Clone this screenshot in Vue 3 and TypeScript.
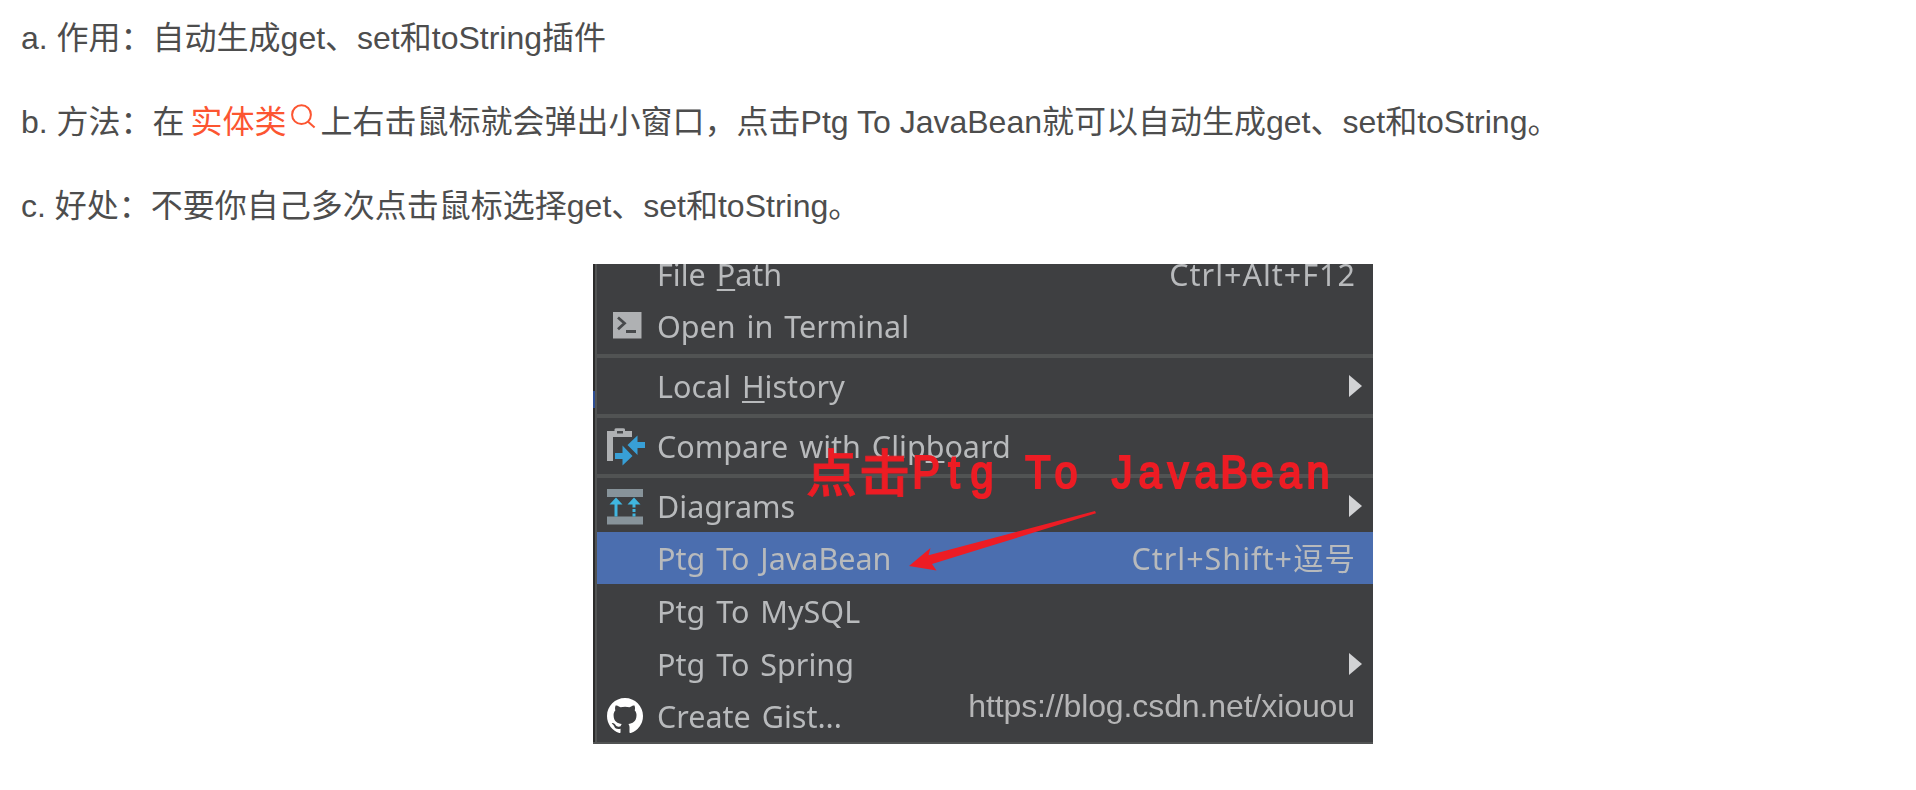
<script setup lang="ts">
interface MenuRow {
  before: string
  key?: string
  after?: string
  icon?: 'terminal' | 'clipboard' | 'diagram' | 'github'
  shortcut?: string
  submenu?: boolean
  active?: boolean
  divider?: boolean
  tall?: boolean
}

const rows: MenuRow[] = [
  { before: 'File ', key: 'P', after: 'ath', shortcut: 'Ctrl+Alt+F12' },
  { before: 'Open in Terminal', icon: 'terminal', divider: true },
  { before: 'Local ', key: 'H', after: 'istory', submenu: true, divider: true },
  { before: 'Compare with Clip', key: 'b', after: 'oard', icon: 'clipboard', divider: true },
  { before: 'Diagrams', icon: 'diagram', submenu: true },
  { before: 'Ptg To JavaBean', shortcut: 'Ctrl+Shift+逗号', active: true },
  { before: 'Ptg To MySQL', tall: true },
  { before: 'Ptg To Spring', submenu: true, tall: true },
  { before: 'Create Gist...', icon: 'github' },
]

const noteLetters = Array.from('Ptg To JavaBean')
</script>

<template>
  <article class="post">
    <p>a. 作用：自动生成get、set和toString插件</p>
    <p>
      b. 方法：在<a class="keyword">实体类<svg class="lens" viewBox="0 0 25 25"><circle cx="10.5" cy="10.7" r="9.4" /><path d="M16.8 17.6 23.6 23.6" /></svg></a>上右击鼠标就会弹出小窗口，点击Ptg To JavaBean就可以自动生成get、set和toString。
    </p>
    <p>c. 好处：不要你自己多次点击鼠标选择get、set和toString。</p>

    <figure class="shot">
      <div class="edge"></div>
      <div class="menu">
        <template v-for="row in rows" :key="row.before">
          <div class="row" :class="{ active: row.active, tall: row.tall }">
            <span class="icon">
              <svg v-if="row.icon === 'terminal'" width="40" height="40" viewBox="0 -1 40 40">
                <path fill="#afb1b3" d="M6 5h28.500v26.500H6z" />
                <path fill="none" stroke="#47494b" stroke-width="2.800" d="m11 10.500 6.500 5.700-6.500 6M19 24.500h10" />
              </svg>
              <svg v-else-if="row.icon === 'clipboard'" width="40" height="40" viewBox="0 -2 40 40">
                <path fill="#afb1b3" d="M0 3h7.500V1.500Q7.500.200 9.500.200h6.500q2 0 2 1.300V3H25v6H6v24H0z" />
                <path fill="#47494b" d="M10 3h6v2.500h-6z" />
                <path fill="#389fd6" d="M20.500 17 30.500 7.500V14H38v6h-7.500v7zM8 25h7.500v-7.500L25.500 28l-10 9.500V31H8z" />
              </svg>
              <svg v-else-if="row.icon === 'diagram'" width="40" height="40" viewBox="0 -2 40 40">
                <path fill="#87939a" d="M0 1h36v8H0zM0 28.500h36v8H0z" />
                <path fill="#40b6e0" d="m9 9.500 6.500 7h-5V28.500h-3v-12h-5zM27 9.500l6.500 7h-5v3h-3v-3h-5zM25.500 21h3v3h-3zM25.500 25.500h3v3h-3z" />
              </svg>
              <svg v-else-if="row.icon === 'github'" width="36" height="36" viewBox="0 0 16 16">
                <path fill="#fff" d="M8 0C3.580 0 0 3.580 0 8c0 3.540 2.290 6.530 5.470 7.590.4.070.55-.17.55-.38 0-.19-.01-.82-.01-1.490-2.010.37-2.530-.49-2.690-.94-.09-.23-.48-.94-.82-1.130-.28-.15-.68-.52-.01-.53.63-.01 1.080.58 1.230.82.72 1.210 1.870.87 2.330.66.07-.52.28-.87.51-1.070-1.780-.2-3.640-.89-3.640-3.950 0-.87.31-1.590.82-2.150-.08-.2-.36-1.020.08-2.120 0 0 .67-.21 2.200.82.64-.18 1.320-.27 2-.27s1.360.09 2 .27c1.530-1.040 2.200-.82 2.200-.82.44 1.100.16 1.920.08 2.120.51.56.82 1.270.82 2.150 0 3.070-1.870 3.750-3.650 3.950.29.25.54.73.54 1.480 0 1.070-.01 1.930-.01 2.200 0 .21.15.46.55.38A8.010 8.010 0 0 0 16 8c0-4.420-3.580-8-8-8" />
              </svg>
            </span>
            <span class="label">{{ row.before }}<span v-if="row.key" class="key">{{ row.key }}</span>{{ row.after }}</span>
            <span v-if="row.shortcut" class="shortcut">{{ row.shortcut }}</span>
            <i v-if="row.submenu" class="caret"></i>
          </div>
          <div v-if="row.divider" class="divider"></div>
        </template>
      </div>

      <div class="note">
        <span class="note-cjk">点击</span><span v-for="(ch, i) in noteLetters" :key="i" class="cell">{{ ch }}</span>
      </div>
      <svg class="arrow" viewBox="0 0 190 64">
        <path fill="#ed1c24" d="M0 56 21.500 38l-2 7.200L186 1l1 2.300L78 37 23 54l4.500 6.500z" />
      </svg>
      <span class="watermark">https://blog.csdn.net/xiouou</span>
    </figure>
  </article>
</template>

<style>
body {
  margin: 0;
  background: #fff;
  overflow: hidden;
}
</style>

<style scoped>
.post {
  box-sizing: border-box;
  width: 1916px;
  height: 790px;
  padding: 12px 0 0 21px;
  overflow: hidden;
  color: #4d4d4d;
  font: 32px/52px "Liberation Sans", "Noto Sans CJK SC", sans-serif;
}
p {
  height: 52px;
  margin: 0 0 32px;
  white-space: nowrap;
}
.keyword {
  margin: 0 5px 0 6px;
  color: #fc5531;
}
.lens {
  width: 25px;
  height: 25px;
  margin-left: 4px;
  vertical-align: 4px;
  fill: none;
  stroke: #fc5531;
  stroke-width: 2;
}
.shot {
  position: relative;
  display: flex;
  box-sizing: border-box;
  width: 780px;
  height: 480px;
  margin: 0 0 0 572px;
  overflow: hidden;
  background: #3e3f41;
  border-bottom: 2px solid #515353;
}
.edge {
  flex: none;
  width: 2px;
  background: linear-gradient(#2b2b2b 0 127px, #2d4d93 127px 144px, #2b2b2b 144px);
  border-right: 2px solid #515353;
}
.menu {
  flex: 1;
  margin-top: -16px;
  filter: blur(0.5px);
}
.row {
  display: flex;
  align-items: center;
  height: 52px;
  padding-right: 18px;
  color: #b8babc;
  font: 30.5px/52px "Noto Sans", "Noto Sans CJK SC", sans-serif;
  white-space: nowrap;
}
.row.tall {
  height: 53px;
}
.row.active {
  background: #4b6eaf;
}
.icon {
  display: flex;
  width: 50px;
  padding-left: 10px;
}
.label {
  flex: 1;
  word-spacing: 3px;
}
.key {
  text-decoration: underline;
  text-decoration-thickness: 2px;
  text-underline-offset: 3px;
}
.shortcut {
  margin-right: -1px;
  letter-spacing: 1px;
}
.caret {
  width: 0;
  margin-right: -7px;
  border: solid transparent;
  border-width: 11px 0 11px 13px;
  border-left-color: #d2d3d5;
}
.divider {
  height: 4px;
  margin: 2px 0;
  background: #515353;
}
.note {
  position: absolute;
  top: 176px;
  left: 213px;
  display: flex;
  align-items: flex-start;
  color: #ed1c24;
  white-space: nowrap;
  filter: blur(0.4px);
}
.note-cjk {
  width: 106px;
  font: 500 51px/60px "Noto Sans CJK SC", sans-serif;
  letter-spacing: 2px;
  -webkit-text-stroke: 0.8px #ed1c24;
}
.cell {
  display: flex;
  justify-content: center;
  width: 28px;
  font: 46px/64px "Liberation Sans", sans-serif;
  transform: scaleX(0.9);
  -webkit-text-stroke: 2.2px #ed1c24;
}
.arrow {
  position: absolute;
  top: 246px;
  left: 316px;
  width: 190px;
  height: 64px;
}
.watermark {
  position: absolute;
  right: 18px;
  bottom: 10px;
  color: #b5b5b6;
  font-size: 32px;
  line-height: 52px;
  letter-spacing: -0.1px;
  filter: blur(0.5px);
}
</style>
